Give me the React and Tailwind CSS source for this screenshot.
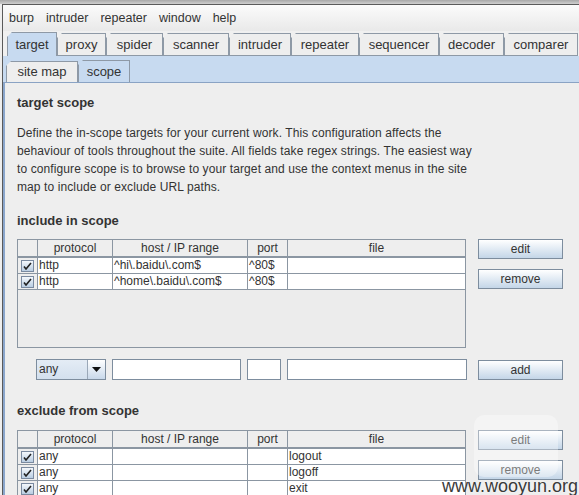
const mainTabs = [
  ['target', 'w-[50px]', true],
  ['proxy', 'w-[49px]', false],
  ['spider', 'w-[57px]', false],
  ['scanner', 'w-[66px]', false],
  ['intruder', 'w-[62px]', false],
  ['repeater', 'w-[68px]', false],
  ['sequencer', 'w-[80px]', false],
  ['decoder', 'w-[65px]', false],
  ['comparer', 'w-[74px]', false],
];

const Check = () => (
  <div className="w-[13px] h-[12px] border border-[#7a8aa0] bg-gradient-to-b from-[#f4f8fc] to-[#b9cde2] flex items-center justify-center">
    <svg width="9" height="8" viewBox="0 0 9 8">
      <path d="M1 4.5 L3 7 L8 1" fill="none" stroke="#222" strokeWidth="1.6" />
    </svg>
  </div>
);

const Btn = ({ children }) => (
  <div className="w-[85px] h-[20px] border border-[#7d8d9e] bg-gradient-to-b from-[#ffffff] to-[#c4d6e8] flex items-center justify-center text-[12px] text-[#333]">
    {children}
  </div>
);

const cols = ['w-[20px]', 'w-[75px]', 'w-[135px]', 'w-[40px]', 'flex-1'];

const ScopeTable = ({ rows, height }) => (
  <div className={`w-[449px] ${height} border border-[#8b96a2] bg-[#ececec] flex flex-col`}>
    <div className="flex h-[18px] border-b-2 border-[#8b96a2] bg-[#eeeeee] text-[12px]">
      {['', 'protocol', 'host / IP range', 'port', 'file'].map((h, i) => (
        <div key={i} className={`${cols[i]} border-r border-[#8b96a2] last:border-r-0 flex items-center justify-center`}>
          {h}
        </div>
      ))}
    </div>
    {rows.map((r, ri) => (
      <div key={ri} className="flex h-[16px] border-b border-[#8b96a2] bg-white text-[12px]">
        <div className={`${cols[0]} bg-[#eeeeee] border-r border-[#8b96a2] flex items-center justify-center`}>
          <Check />
        </div>
        {r.map((c, ci) => (
          <div key={ci} className={`${cols[ci + 1]} border-r border-[#8b96a2] last:border-r-0 pl-[1px] leading-[15px] overflow-hidden whitespace-nowrap`}>
            {c}
          </div>
        ))}
      </div>
    ))}
  </div>
);

export default function App() {
  return (
    <div className="relative w-[579px] h-[495px] overflow-hidden bg-[#eeeeee] font-['Liberation_Sans',Arial,sans-serif] text-[#333]">
      <div className="h-[4px] bg-gradient-to-b from-[#a8a8a8] to-[#cfcfcf]" />
      <div className="pl-[2px] bg-[#eeeeee]">
        <div className="border-l border-t border-[#5a5a5a]">
          {/* menu bar */}
          <div className="h-[26px] flex items-center gap-[12px] pl-[6px] text-[12.5px] bg-gradient-to-b from-[#fbfbfb] to-[#e9e9e9]">
            <span>burp</span>
            <span>intruder</span>
            <span>repeater</span>
            <span>window</span>
            <span>help</span>
          </div>

          {/* main tabs */}
          <div className="flex items-end h-[25px] pl-[4px] bg-[#f0f0f0]">
            {mainTabs.map(([t, w, sel]) => (
              <div
                key={t}
                className={`${w} h-[23px] flex items-center justify-center text-[13px] border-t border-l border-r border-[#8e99a6] [clip-path:polygon(0_5px,5px_0,100%_0,100%_100%,0_100%)] ${
                  sel ? 'bg-[#c7daf0] h-[24px]' : 'bg-[#eeeeee] border-b'
                }`}
              >
                {t}
              </div>
            ))}
          </div>

          {/* sub tabs band */}
          <div className="h-[27px] bg-[#c7daf0] flex items-end pl-[3px] border-b border-[#8aa3c4]">
            <div className="w-[72px] h-[21px] border-t border-l border-r border-[#8e99a6] bg-[#eeeeee] flex items-center justify-center text-[13px] [clip-path:polygon(0_5px,5px_0,100%_0,100%_100%,0_100%)]">
              site map
            </div>
            <div className="w-[52px] h-[22px] border-t border-l border-r border-[#8e99a6] bg-[#c7daf0] flex items-center justify-center text-[13px] [clip-path:polygon(0_5px,5px_0,100%_0,100%_100%,0_100%)]">
              scope
            </div>
          </div>

          {/* content */}
          <div className="border-l-2 border-[#8aa6cc] pl-[12px] pt-[12px] text-[13px] h-[420px]">
            <div className="font-bold leading-[16px]">target scope</div>
            <p className="mt-[13px] leading-[18px] text-[12px] tracking-[0.1px] whitespace-nowrap">
              Define the in-scope targets for your current work. This configuration affects the
              <br />
              behaviour of tools throughout the suite. All fields take regex strings. The easiest way
              <br />
              to configure scope is to browse to your target and use the context menus in the site
              <br />
              map to include or exclude URL paths.
            </p>
            <div className="font-bold leading-[16px] mt-[17px]">include in scope</div>

            <div className="flex mt-[10px] gap-[12px]">
              <ScopeTable
                height="h-[109px]"
                rows={[
                  ['http', '^hi\\.baidu\\.com$', '^80$', ''],
                  ['http', '^home\\.baidu\\.com$', '^80$', ''],
                ]}
              />
              <div className="flex flex-col gap-[10px]">
                <Btn>edit</Btn>
                <Btn>remove</Btn>
              </div>
            </div>

            <div className="flex mt-[11px] items-center">
              <div className="ml-[19px] w-[70px] h-[21px] border border-[#7d8d9e] flex">
                <div className="flex-1 bg-gradient-to-b from-[#e4ecf5] to-[#d3e0ee] text-[12px] pl-[2px] leading-[19px]">any</div>
                <div className="w-[18px] border-l border-[#9aa8b8] bg-gradient-to-b from-[#ffffff] to-[#c8d8ea] flex items-center justify-center">
                  <svg width="9" height="5" viewBox="0 0 9 5"><path d="M0 0 H9 L4.5 5 Z" fill="#111" /></svg>
                </div>
              </div>
              <div className="ml-[6px] w-[129px] h-[21px] border border-[#7d8d9e] bg-white" />
              <div className="ml-[6px] w-[34px] h-[21px] border border-[#7d8d9e] bg-white" />
              <div className="ml-[6px] w-[180px] h-[21px] border border-[#7d8d9e] bg-white" />
              <div className="ml-[11px]">
                <Btn>add</Btn>
              </div>
            </div>

            <div className="font-bold leading-[16px] mt-[23px]">exclude from scope</div>

            <div className="flex mt-[11px] gap-[12px]">
              <ScopeTable
                height="h-[80px]"
                rows={[
                  ['any', '', '', 'logout'],
                  ['any', '', '', 'logoff'],
                  ['any', '', '', 'exit'],
                ]}
              />
              <div className="flex flex-col gap-[10px]">
                <Btn>edit</Btn>
                <Btn>remove</Btn>
              </div>
            </div>
          </div>
        </div>
      </div>

      {/* watermark */}
      <div className="absolute left-[474px] top-[415px] w-[84px] h-[62px] rounded-[10px] bg-white/35" />
      <div className="absolute left-[442px] top-[476px] text-[18px] leading-[20px] text-[#3a3a3a] [text-shadow:0_0_2px_#fff]">
        www.wooyun.org
      </div>
    </div>
  );
}
